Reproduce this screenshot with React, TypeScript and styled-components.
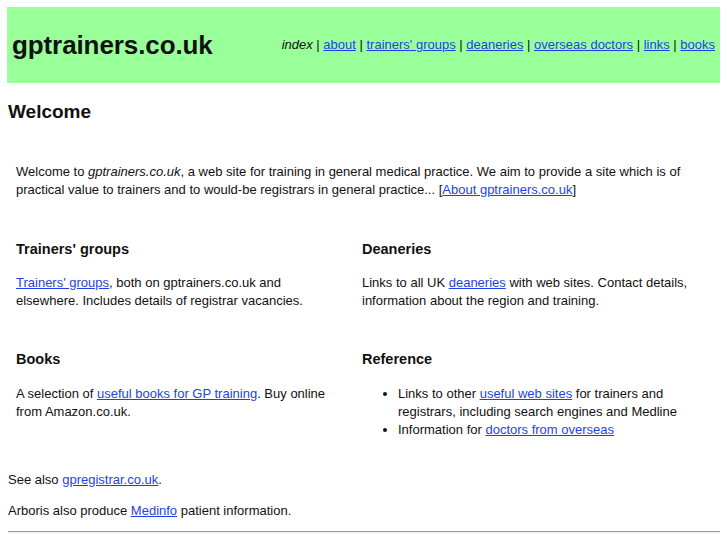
import React from "react";
import styled, { createGlobalStyle } from "styled-components";

const Global = createGlobalStyle`
  html, body { margin: 0; padding: 0; background: #fff; }
  body { font-family: "Liberation Sans", Arial, sans-serif; color: #111; }
  a { color: #1f3fe8; text-decoration: underline; }
`;

const Page = styled.div`
  padding: 7px 7px 0 7px;
`;

const Header = styled.header`
  height: 76px;
  background: #99ff99;
  display: flex;
  align-items: center;
  justify-content: space-between;
  padding: 0 5px 0 5px;
`;

const SiteTitle = styled.h1`
  margin: 0;
  font-size: 26px;
  font-weight: bold;
  line-height: 30px;
  letter-spacing: -0.1px;
`;

const Nav = styled.nav`
  font-size: 13px;
  line-height: 16px;
  em { font-style: italic; }
`;

const PageTitle = styled.h2`
  margin: 17px 0 0 1px;
  font-size: 19px;
  line-height: 24px;
  font-weight: bold;
`;

const Grid = styled.div`
  display: grid;
  grid-template-columns: 346px 1fr;
  padding: 0 9px;
  font-size: 13px;
  line-height: 18px;
`;

const Intro = styled.p`
  grid-column: 1 / span 2;
  margin: 39px 0 0 0;
`;

const Cell = styled.div<{ $narrow?: boolean }>`
  padding-right: ${(p) => (p.$narrow ? "16px" : "0")};
`;

const SectionTitle = styled.h3<{ $top: number; $bottom: number }>`
  margin: ${(p) => p.$top}px 0 ${(p) => p.$bottom}px 0;
  font-size: 14.5px;
  line-height: 18px;
  font-weight: bold;
`;

const Text = styled.p`
  margin: 0;
`;

const List = styled.ul`
  margin: 0;
  padding-left: 36px;
`;

const Footer = styled.div`
  font-size: 13px;
  line-height: 18px;
  padding-left: 1px;
`;

const FootLine = styled.p<{ $top: number }>`
  margin: ${(p) => p.$top}px 0 0 0;
`;

const Rule = styled.hr`
  margin: 11px 0 0 0;
  border: none;
  border-top: 1px solid #9a9a9a;
  border-bottom: 1px solid #eeeeee;
  height: 0;
`;

export default function App() {
  return (
    <>
      <Global />
      <Page>
        <Header>
          <SiteTitle>gptrainers.co.uk</SiteTitle>
          <Nav>
            <em>index</em> | <a href="#">about</a> | <a href="#">trainers' groups</a> |{" "}
            <a href="#">deaneries</a> | <a href="#">overseas doctors</a> |{" "}
            <a href="#">links</a> | <a href="#">books</a>
          </Nav>
        </Header>
        <PageTitle>Welcome</PageTitle>
        <Grid>
          <Intro>
            Welcome to <em>gptrainers.co.uk</em>, a web site for training in general medical
            practice. We aim to provide a site which is of practical value to trainers and to
            would-be registrars in general practice... [<a href="#">About gptrainers.co.uk</a>]
          </Intro>
          <Cell $narrow>
            <SectionTitle $top={41} $bottom={16}>Trainers' groups</SectionTitle>
            <Text>
              <a href="#">Trainers' groups</a>, both on gptrainers.co.uk and elsewhere. Includes
              details of registrar vacancies.
            </Text>
          </Cell>
          <Cell>
            <SectionTitle $top={41} $bottom={16}>Deaneries</SectionTitle>
            <Text>
              Links to all UK <a href="#">deaneries</a> with web sites. Contact details,
              information about the region and training.
            </Text>
          </Cell>
          <Cell $narrow>
            <SectionTitle $top={40} $bottom={17}>Books</SectionTitle>
            <Text>
              A selection of <a href="#">useful books for GP training</a>. Buy online from
              Amazon.co.uk.
            </Text>
          </Cell>
          <Cell>
            <SectionTitle $top={40} $bottom={17}>Reference</SectionTitle>
            <List>
              <li>
                Links to other <a href="#">useful web sites</a> for trainers and registrars,
                including search engines and Medline
              </li>
              <li>
                Information for <a href="#">doctors from overseas</a>
              </li>
            </List>
          </Cell>
        </Grid>
        <Footer>
          <FootLine $top={32}>
            See also <a href="#">gpregistrar.co.uk</a>.
          </FootLine>
          <FootLine $top={13}>
            Arboris also produce <a href="#">Medinfo</a> patient information.
          </FootLine>
          <Rule />
        </Footer>
      </Page>
    </>
  );
}
